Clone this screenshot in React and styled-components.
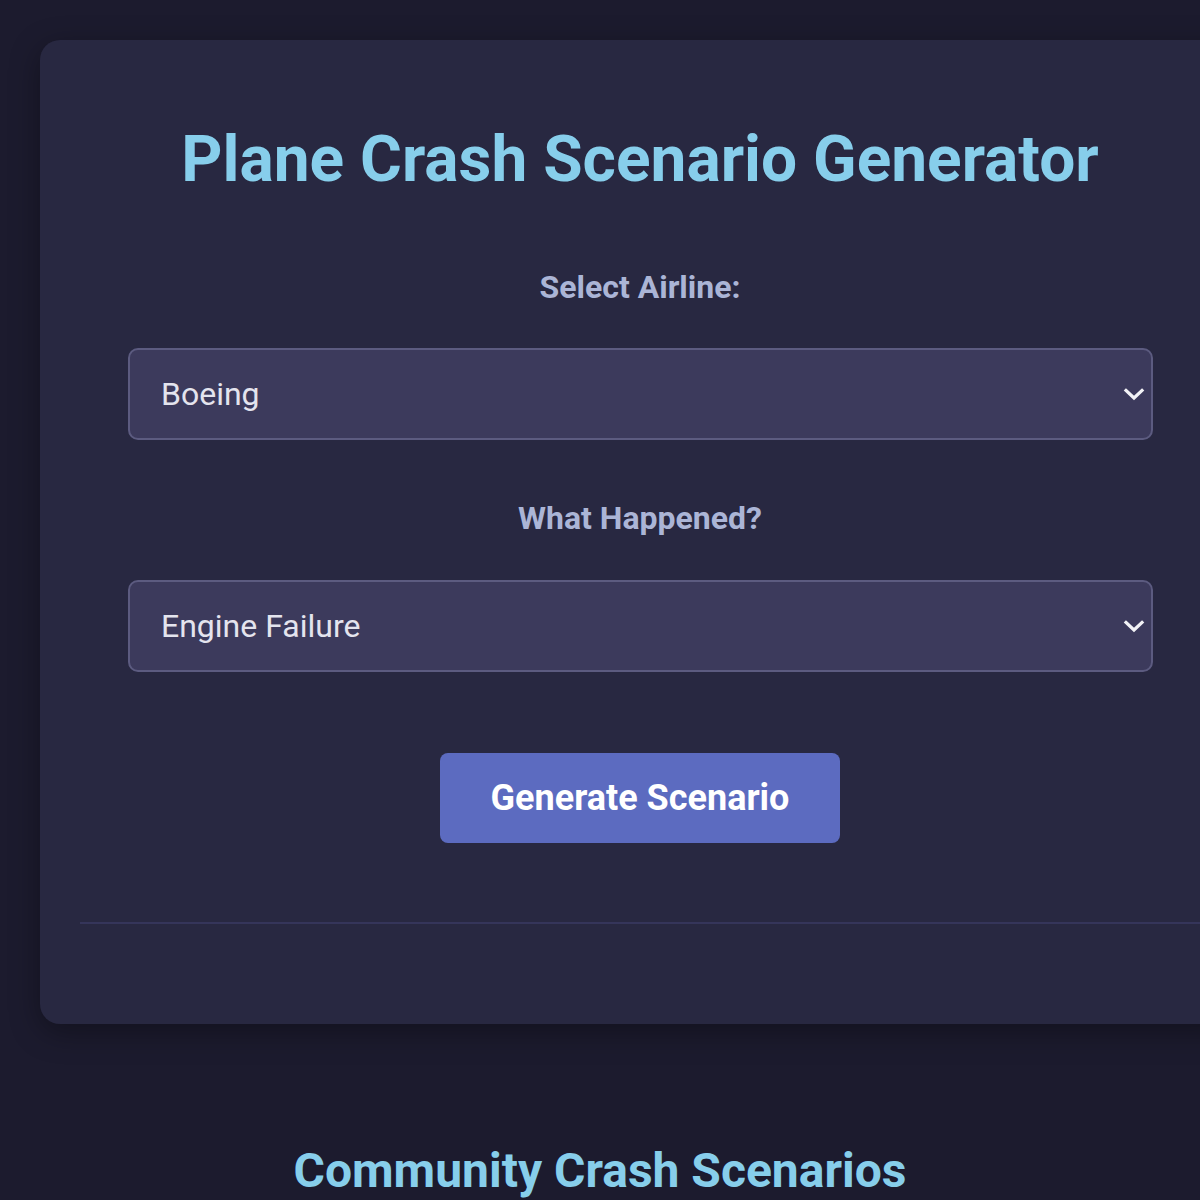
import styled, { createGlobalStyle } from 'styled-components';

const GlobalStyle = createGlobalStyle`
  html, body {
    margin: 0;
    padding: 0;
    overflow: hidden;
    background-color: #1c1b2e;
  }
  body {
    font-family: Roboto, "Liberation Sans", sans-serif;
  }
`;

const Page = styled.div`
  padding: 40px;
  min-height: 100vh;
  box-sizing: border-box;
`;

const Card = styled.div`
  width: 1200px;
  box-sizing: border-box;
  background-color: #282841;
  border-radius: 20px;
  padding: 40px;
  box-shadow: 0 8px 30px rgba(0, 0, 0, 0.35);
  text-align: center;
`;

const Title = styled.h1`
  margin: 42px 0 0;
  font-size: 64px;
  line-height: 1.2;
  font-weight: 700;
  color: #87ceeb;
`;

const Label = styled.label`
  display: block;
  margin-top: ${p => p.$top}px;
  font-size: 32px;
  line-height: 1.2;
  font-weight: 700;
  color: #abb5d6;
`;

const SelectWrap = styled.div`
  position: relative;
  margin: 42px 47px 0 48px;

  svg {
    position: absolute;
    right: 8px;
    top: 50%;
    transform: translateY(-50%);
    pointer-events: none;
  }
`;

const Select = styled.select`
  appearance: none;
  width: 100%;
  height: 92px;
  box-sizing: border-box;
  padding: 0 31px;
  background-color: #3c3a5c;
  border: 2px solid #5c5b80;
  border-radius: 10px;
  color: #e4e4ee;
  font-family: Roboto, "Liberation Sans", sans-serif;
  font-size: 32px;
  outline: none;
`;

const Button = styled.button`
  display: block;
  margin: 81px auto 0;
  width: 400px;
  height: 90px;
  border: none;
  border-radius: 8px;
  background-color: #5c6bc0;
  color: #ffffff;
  font-family: Roboto, "Liberation Sans", sans-serif;
  font-size: 36px;
  font-weight: 700;
`;

const Divider = styled.hr`
  margin: 79px 0 0;
  border: none;
  height: 2px;
  background-color: #35355a;
`;

const Results = styled.div`
  height: 60px;
`;

const SectionTitle = styled.h2`
  margin: 118px 0 0;
  text-align: center;
  font-size: 48px;
  line-height: 1.2;
  font-weight: 700;
  color: #87ceeb;
`;

const Chevron = () => (
  <svg width="22" height="14" viewBox="0 0 22 14" fill="none">
    <path d="M3 3.5 L11 11 L19 3.5" stroke="#f2f2f6" strokeWidth="3.2" strokeLinecap="square" />
  </svg>
);

function App() {
  return (
    <>
      <GlobalStyle />
      <Page>
        <Card>
          <Title>Plane Crash Scenario Generator</Title>
          <Label $top={69}>Select Airline:</Label>
          <SelectWrap>
            <Select defaultValue="Boeing">
              <option>Boeing</option>
              <option>Airbus</option>
              <option>Embraer</option>
            </Select>
            <Chevron />
          </SelectWrap>
          <Label $top={59}>What Happened?</Label>
          <SelectWrap>
            <Select defaultValue="Engine Failure">
              <option>Engine Failure</option>
              <option>Bird Strike</option>
              <option>Pilot Error</option>
            </Select>
            <Chevron />
          </SelectWrap>
          <Button>Generate Scenario</Button>
          <Divider />
          <Results />
        </Card>
        <SectionTitle>Community Crash Scenarios</SectionTitle>
      </Page>
    </>
  );
}

export default App;
